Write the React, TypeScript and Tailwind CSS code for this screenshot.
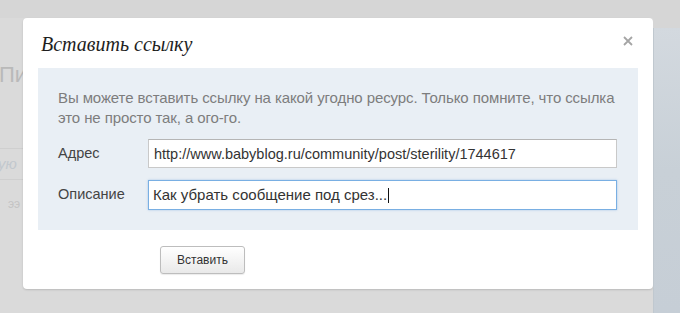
import { useState } from "react";

export default function App() {
  const [url, setUrl] = useState("http://www.babyblog.ru/community/post/sterility/1744617");
  const desc = "Как убрать сообщение под срез...";

  return (
    <div className="w-[680px] h-[313px] bg-[#dadada] flex overflow-hidden font-['Liberation_Sans',Arial,sans-serif]">
      {/* faded page behind the overlay */}
      <div className="w-[23px] shrink-0 overflow-hidden flex flex-col">
        <div className="h-[18px] bg-[#d6d6d6]" />
        <div className="mt-[44px] text-[22px] leading-[26px] text-[#b9b9b9] whitespace-nowrap -ml-[1px]">Пи</div>
        <div className="mt-[60px] border-t border-[#cfcfcf] w-full" />
        <div className="mt-[6px] text-[15px] leading-[18px] italic text-[#c2c8ce] whitespace-nowrap -ml-[2px]">ую</div>
        <div className="mt-[6px] border-t border-[#cfcfcf] w-full" />
        <div className="mt-[15px] text-[12px] text-[#c4c4c4] whitespace-nowrap ml-[8px]">ээ</div>
      </div>

      <div className="w-[630px] shrink-0 flex flex-col">
        <div className="h-[18px] bg-[#d6d6d6]" />
        <div className="bg-white rounded-[4px] shadow-[0_1px_2px_rgba(0,0,0,0.15)] px-[15px] pb-[15px] flex flex-col">
          <div className="h-[50px] flex items-center justify-between pl-[3px] pr-[4px]">
            <h1 className="font-['Liberation_Serif',Georgia,serif] italic text-[20px] text-[#1e1e1e] mt-[1px]">Вставить ссылку</h1>
            <button className="w-[12px] h-[12px] flex items-center justify-center -mt-[4px]">
              <svg width="10" height="10" viewBox="0 0 10 10">
                <path d="M1 1 L9 9 M9 1 L1 9" stroke="#a5a5a5" strokeWidth="1.8" />
              </svg>
            </button>
          </div>

          <div className="bg-[#e9eff5] px-[20px] pt-[20px] pb-[20px] flex flex-col">
            <p className="text-[15px] leading-[20px] text-[#7d7d7d] tracking-[-0.1px]">
              Вы можете вставить ссылку на какой угодно ресурс. Только помните, что ссылка это не просто так, а ого-го.
            </p>
            <div className="mt-[11px] flex flex-col gap-[12px]">
              <label className="flex items-center">
                <span className="w-[90px] text-[14.5px] text-[#444]">Адрес</span>
                <input
                  value={url}
                  onChange={(e) => setUrl(e.target.value)}
                  className="w-[469px] h-[29px] bg-white border border-[#c9c9c9] border-t-[#b5b5b5] px-[5px] text-[14.5px] text-[#333] outline-none"
                />
              </label>
              <label className="flex items-center">
                <span className="w-[90px] text-[14.5px] text-[#444]">Описание</span>
                <div className="w-[469px] h-[30px] bg-white border border-[#79afe3] shadow-[0_0_2px_rgba(100,160,220,0.5)] px-[4px] flex items-center">
                  <span className="text-[15px] text-[#333] whitespace-nowrap">{desc}</span>
                  <span className="w-px h-[15px] bg-[#111] ml-px" />
                </div>
              </label>
            </div>
          </div>

          <div className="pt-[16px] pl-[122px]">
            <button className="w-[85px] h-[28px] rounded-[3px] border border-[#bdbdbd] bg-gradient-to-b from-white to-[#e9e9e9] text-[12px] text-[#333] shadow-[0_1px_1px_rgba(0,0,0,0.08)]">
              Вставить
            </button>
          </div>
        </div>
      </div>

      <div className="flex-1 flex flex-col">
        <div className="h-[28px] bg-[#d6d6d6]" />
        <div className="flex-1 bg-gradient-to-b from-[#d3d9df] via-[#c8d0d7] to-[#c6ced6] border-l border-[#c0c8cf]" />
      </div>
    </div>
  );
}
